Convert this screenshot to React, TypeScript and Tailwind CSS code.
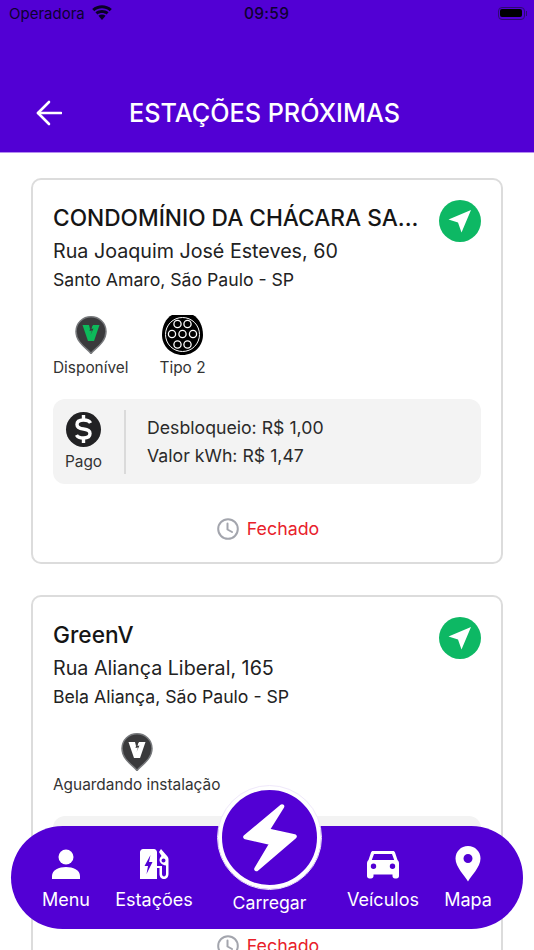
import React from "react";

const font = { fontFamily: "Inter, 'Noto Sans', sans-serif" };

function NavArrow() {
  return (
    <div className="w-[42px] h-[42px] rounded-full bg-[#0DB864] flex items-center justify-center shrink-0">
      <svg width="26" height="26" viewBox="0 0 26 26" fill="#fff">
        <path d="M24 2 L1.5 11.5 L11 14.5 L14.5 24.5 Z" />
      </svg>
    </div>
  );
}

function Pin({ green }: { green?: boolean }) {
  return (
    <svg width="32" height="38" viewBox="0 0 32 38">
      <path d="M16 37.5 C13 33 1 27 1 15.5 C1 7 7.7 .8 16 .8 C24.3 .8 31 7 31 15.5 C31 27 19 33 16 37.5 Z" fill="#3a3a3c" stroke="#77797c" strokeWidth="1.5" />
      <path d="M7.5 9 H14 L16 17 L15 13 L18 9 H24.5 L19 25 H13 Z" fill={green ? "#0DB95A" : "#ffffff"} />
      <path d="M16 9 L14.5 15 L17 14.5 L15.5 19 L18.5 12.5 L16.5 13 L17.5 9 Z" fill="#3a3a3c" />
    </svg>
  );
}

function Plug() {
  const holes: [number, number][] = [[15.5, 9], [25.5, 9], [10, 19], [20.5, 19], [31, 19], [15.5, 29.5], [25.5, 29.5]];
  return (
    <svg width="41" height="40" viewBox="0 0 41 40">
      <path d="M10 0 H31 C37 3 41 11 41 20 C41 31 32 40 20.5 40 C9 40 0 31 0 20 C0 11 4 3 10 0 Z" fill="#000" />
      <circle cx="20.5" cy="19.5" r="17" fill="none" stroke="#fff" strokeWidth="1" />
      {holes.map(([x, y]) => (
        <circle key={x + "-" + y} cx={x} cy={y} r="3.6" fill="none" stroke="#fff" strokeWidth="1.3" />
      ))}
    </svg>
  );
}

function Dollar() {
  return (
    <div className="w-[35px] h-[35px] rounded-full bg-[#222224] flex items-center justify-center">
      <svg width="19" height="28" viewBox="0 0 19 28" fill="none" stroke="#fff" strokeWidth="3.4">
        <path d="M9.5 0 V5" />
        <path d="M9.5 23 V28" />
        <path d="M16.5 8 C15.5 6 13 5 9.5 5 C5.5 5 3 6.7 3 9.5 C3 12.5 5.5 13.5 9.5 14 C13.5 14.5 16 15.7 16 18.5 C16 21.3 13.5 23 9.5 23 C6 23 3.5 22 2.5 20" />
      </svg>
    </div>
  );
}

function Clock() {
  return (
    <svg width="22" height="22" viewBox="0 0 22 22" fill="none" stroke="#A3A5AD" strokeWidth="2" strokeLinecap="round" strokeLinejoin="round">
      <circle cx="11" cy="11" r="9.8" />
      <path d="M10.5 5.5 V11.5 L15 14" />
    </svg>
  );
}

function Card({ title, address, city, statusLabel, green, plug, mtClass }: { title: string; address: string; city: string; statusLabel: string; green?: boolean; plug?: boolean; mtClass?: string }) {
  return (
    <div className={"mx-[31px] h-[386px] rounded-[10px] border-2 border-[#DCDCDC] bg-white px-[20px] pt-[20px] " + (mtClass ?? "")}>
      <div className="flex justify-between">
        <div className="min-w-0 w-[375px] -mt-[1px]">
          <div className="whitespace-nowrap text-[22.7px] leading-[38px] font-medium text-[#151515]">{title}</div>
          <div className="text-[19.7px] leading-[24px] mt-[2px] text-[#222] whitespace-nowrap">{address}</div>
          <div className="text-[17.65px] leading-[24px] mt-[5px] text-[#222] whitespace-nowrap">{city}</div>
        </div>
        <NavArrow />
      </div>
      <div className="flex gap-[31px] mt-[23px]">
        <div className="flex flex-col items-center">
          <div className="h-[40px] flex items-center"><Pin green={green} /></div>
          <div className="text-[15.4px] leading-[20px] mt-[3px] text-[#333]">{statusLabel}</div>
        </div>
        {plug && (
          <div className="flex flex-col items-center">
            <div className="h-[40px] flex items-center"><Plug /></div>
            <div className="text-[15.4px] leading-[20px] mt-[3px] text-[#333]">Tipo 2</div>
          </div>
        )}
      </div>
      <div className="mt-[21px] h-[85px] rounded-[12px] bg-[#F3F3F3] flex items-center">
        <div className="w-[73px] h-[64px] pr-[10px] border-r-2 border-[#DADADA] flex flex-col items-center justify-center">
          <Dollar />
          <div className="text-[15.4px] leading-[20px] mt-[5px] text-[#333]">Pago</div>
        </div>
        <div className="pl-[21px] text-[17.7px] leading-[28px] text-[#2a2a2a]">
          <div>Desbloqueio: R$ 1,00</div>
          <div>Valor kWh: R$ 1,47</div>
        </div>
      </div>
      <div className="flex items-center justify-center gap-[8px] mt-[33px] h-[24px] pl-[2px]">
        <Clock />
        <span className="text-[17.8px] text-[#E8212A]">Fechado</span>
      </div>
    </div>
  );
}

function NavItem({ label, children, w }: { label: string; children: React.ReactNode; w: string }) {
  return (
    <div className={"flex flex-col items-center shrink-0 " + w}>
      <div className="h-[36px] flex items-center justify-center">{children}</div>
      <div className="text-[18px] leading-[22px] mt-[7px] text-white whitespace-nowrap">{label}</div>
    </div>
  );
}

export default function App() {
  return (
    <div className="relative w-[534px] h-[950px] overflow-hidden bg-white" style={font}>
      <div className="h-[153px] bg-[#5200D4] border-b border-[#B48CF0]">
        <div className="h-[28px] flex items-center pl-[9px] pr-[7px] text-black relative">
          <span className="text-[15px] leading-[28px] text-[#0d0030]">Operadora</span>
          <svg className="ml-[7px] -mt-[3px]" width="20" height="15" viewBox="0 0 20 15" fill="#0a0028">
            <path d="M10 15 L6.4 10.8 C8.4 9.2 11.6 9.2 13.6 10.8 Z" />
            <path d="M5.4 9.6 L3.4 7.3 C7.2 4.2 12.8 4.2 16.6 7.3 L14.6 9.6 C12 7.6 8 7.6 5.4 9.6 Z" />
            <path d="M2.3 6.2 L.2 3.9 C5.8 -1 14.2 -1 19.8 3.9 L17.7 6.2 C13.2 2.4 6.8 2.4 2.3 6.2 Z" />
          </svg>
          <span className="absolute left-[244px] top-0 text-[15.5px] leading-[28px] font-medium tracking-[0.3px] text-[#0d0030]">09:59</span>
          <div className="ml-auto flex items-center -mt-[2px]">
            <div className="w-[27px] h-[13px] rounded-[4px] border border-[#2d0a70] p-[1.5px]">
              <div className="w-full h-full rounded-[2px] bg-black" />
            </div>
            <div className="w-[1.5px] h-[5px] ml-[1px] bg-[#2d0a70]" />
          </div>
        </div>
        <div className="relative h-[124px] flex items-start pt-[72px]">
          <svg className="ml-[36px]" width="26" height="26" viewBox="0 0 26 26" fill="none" stroke="#fff" strokeWidth="2.6" strokeLinecap="round" strokeLinejoin="round">
            <path d="M25 13 H2" />
            <path d="M13 2 L2 13 L13 24" />
          </svg>
          <div className="absolute left-0 right-[5px] top-[69px] text-center text-[25.2px] leading-[32px] font-medium text-white">ESTAÇÕES PRÓXIMAS</div>
        </div>
      </div>

      <div className="pt-[25px]">
        <Card title="CONDOMÍNIO DA CHÁCARA SA..." address="Rua Joaquim José Esteves, 60" city="Santo Amaro, São Paulo - SP" statusLabel="Disponível" green plug />
        <Card title="GreenV" address="Rua Aliança Liberal, 165" city="Bela Aliança, São Paulo - SP" statusLabel="Aguardando instalação" mtClass="mt-[31px]" />
      </div>

      <div className="absolute left-[11px] top-[826px] w-[512px] h-[103px] rounded-[52px] bg-[#5200D4] flex items-start pt-[20px]">
        <NavItem label="Menu" w="w-[60px] ml-[25px]">
          <svg width="30" height="30" viewBox="0 0 30 30" fill="#fff">
            <circle cx="15" cy="8" r="7.5" />
            <path d="M1 30 V27 C1 21 8 18 15 18 C22 18 29 21 29 27 V30 Z" />
          </svg>
        </NavItem>
        <NavItem label="Estações" w="w-[80px] ml-[18px]">
          <svg width="29" height="32" viewBox="0 0 29 32" fill="#fff">
            <path fillRule="evenodd" d="M3 1 H14 C15.5 1 17 2.5 17 4 V31 H0 V4 C0 2.5 1.5 1 3 1 Z M10.5 7 L4.5 18 H8 L6.5 26 L12.5 14 H9 Z" />
            <path fillRule="evenodd" d="M21 1 L27.5 8.5 C28.5 10 28.5 11 28.5 12 V26 C28.5 29 26.5 31 24 31 C21.5 31 19.5 29 19.5 26 V20 H17 V18 H22 V26 C22 27.5 23 28.5 24 28.5 C25 28.5 26 27.5 26 26 V17.5 C22 17 19.5 14.5 19.5 12 C19.5 10 20.5 9 21.5 8 L19 4 Z M23.5 10.5 A2 2 0 1 0 23.5 14.5 A2 2 0 1 0 23.5 10.5 Z" />
          </svg>
        </NavItem>
        <NavItem label="Veículos" w="w-[76px] ml-[151px]">
          <svg width="32" height="29" viewBox="0 0 32 29" fill="#fff">
            <path fillRule="evenodd" d="M6 1 H26 C27 1 27.6 1.5 28 2.5 L30.5 10 C31.5 11 32 12 32 13.5 V26 C32 27.5 31 28.5 29.5 28.5 H28 C26.5 28.5 25.5 27.5 25.5 26 V24.5 H6.5 V26 C6.5 27.5 5.5 28.5 4 28.5 H2.5 C1 28.5 0 27.5 0 26 V13.5 C0 12 .5 11 1.5 10 L4 2.5 C4.4 1.5 5 1 6 1 Z M7 4 L4.8 10 H27.2 L25 4 Z M6.5 13.5 A2.7 2.7 0 1 0 6.5 18.9 A2.7 2.7 0 1 0 6.5 13.5 Z M25.5 13.5 A2.7 2.7 0 1 0 25.5 18.9 A2.7 2.7 0 1 0 25.5 13.5 Z" />
          </svg>
        </NavItem>
        <NavItem label="Mapa" w="w-[46px] ml-[24px]">
          <svg width="26" height="36" viewBox="0 0 26 36" fill="#fff">
            <path fillRule="evenodd" d="M13 35.5 C10 30 .5 21 .5 12.5 C.5 5.5 6 0 13 0 C20 0 25.5 5.5 25.5 12.5 C25.5 21 16 30 13 35.5 Z M13 8 A4.5 4.5 0 1 0 13 17 A4.5 4.5 0 1 0 13 8 Z" />
          </svg>
        </NavItem>
      </div>

      <div className="absolute left-[218px] top-[786px] w-[103px] flex flex-col items-center">
        <div className="w-[103px] h-[103px] rounded-full bg-[#5200D4] border-[4px] border-white outline outline-1 outline-[#EFE8FB] flex items-center justify-center">
          <svg width="56" height="70" viewBox="0 0 56 70" fill="#fff" stroke="#fff" strokeWidth="4.5" strokeLinejoin="round">
            <path d="M40 3.5 L3.5 34 L30 40 L14.5 66 L52.5 33.5 L25 27.5 Z" />
          </svg>
        </div>
        <div className="text-[17.7px] leading-[22px] mt-[3px] text-white whitespace-nowrap">Carregar</div>
      </div>
    </div>
  );
}
